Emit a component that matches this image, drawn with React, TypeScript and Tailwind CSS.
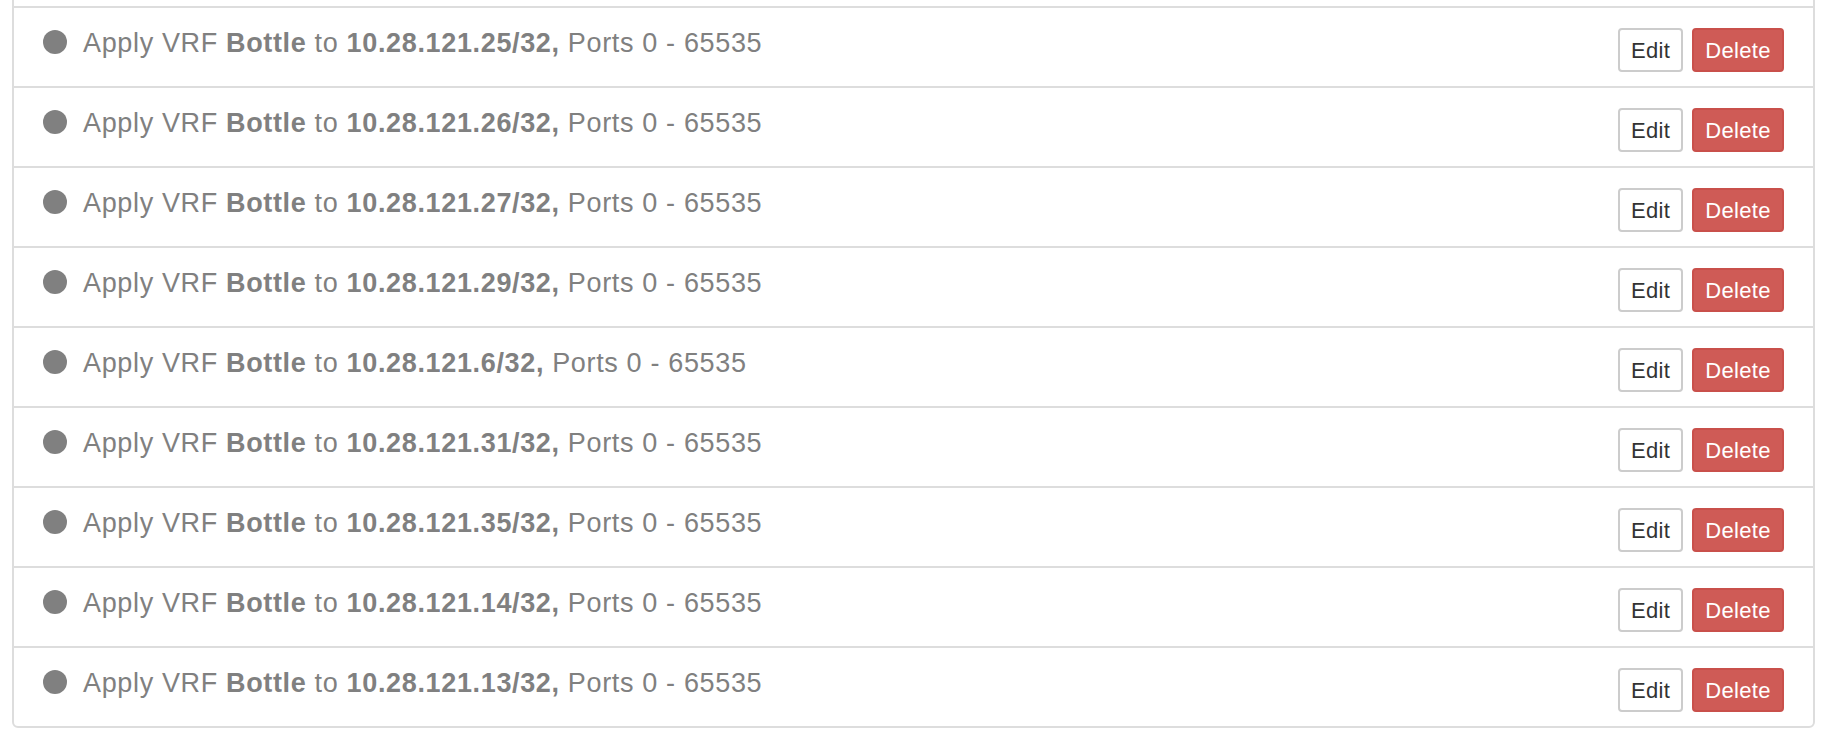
import React from "react";

type Rule = { vrf: string; ip: string; from: number; to: number };

const rules: Rule[] = [
  { vrf: "Bottle", ip: "10.28.121.25/32", from: 0, to: 65535 },
  { vrf: "Bottle", ip: "10.28.121.26/32", from: 0, to: 65535 },
  { vrf: "Bottle", ip: "10.28.121.27/32", from: 0, to: 65535 },
  { vrf: "Bottle", ip: "10.28.121.29/32", from: 0, to: 65535 },
  { vrf: "Bottle", ip: "10.28.121.6/32", from: 0, to: 65535 },
  { vrf: "Bottle", ip: "10.28.121.31/32", from: 0, to: 65535 },
  { vrf: "Bottle", ip: "10.28.121.35/32", from: 0, to: 65535 },
  { vrf: "Bottle", ip: "10.28.121.14/32", from: 0, to: 65535 },
  { vrf: "Bottle", ip: "10.28.121.13/32", from: 0, to: 65535 },
];

function RuleRow({ rule }: { rule: Rule }) {
  return (
    <li className="flex items-start justify-between pl-[29px] pr-[29px] pt-[20px] pb-[14px]">
      <div className="flex items-center gap-[16px] text-[27px] leading-[30px] tracking-[0.65px] text-[#808080]">
        <span className="mt-[-2px] h-[24px] w-[24px] shrink-0 rounded-full bg-[#808080]" />
        <span>
          Apply VRF <b className="font-bold">{rule.vrf}</b> to{" "}
          <b className="font-bold">{rule.ip},</b> Ports {rule.from} - {rule.to}
        </span>
      </div>
      <div className="flex gap-[9px]">
        <button
          type="button"
          className="h-[44px] w-[65px] rounded-[4px] border-2 border-[#cccccc] bg-white text-[22px] tracking-[0.3px] text-[#333333]"
        >
          Edit
        </button>
        <button
          type="button"
          className="h-[44px] w-[92px] rounded-[4px] border-2 border-[#c9504b] bg-[#cf5b56] text-[22px] tracking-[0.3px] text-white"
        >
          Delete
        </button>
      </div>
    </li>
  );
}

export default function App() {
  return (
    <div className="h-[740px] overflow-hidden bg-white font-['Liberation_Sans',Arial,sans-serif]">
      {/* list is scrolled: only the tail of the previous item shows above */}
      <ul className="ml-[12px] mr-[11px] -mt-[2px] divide-y-2 divide-[#dddddd] rounded-b-[6px] border-2 border-[#dddddd]">
        <li className="h-[8px]" />
        {rules.map((r) => (
          <RuleRow key={r.ip} rule={r} />
        ))}
      </ul>
    </div>
  );
}
